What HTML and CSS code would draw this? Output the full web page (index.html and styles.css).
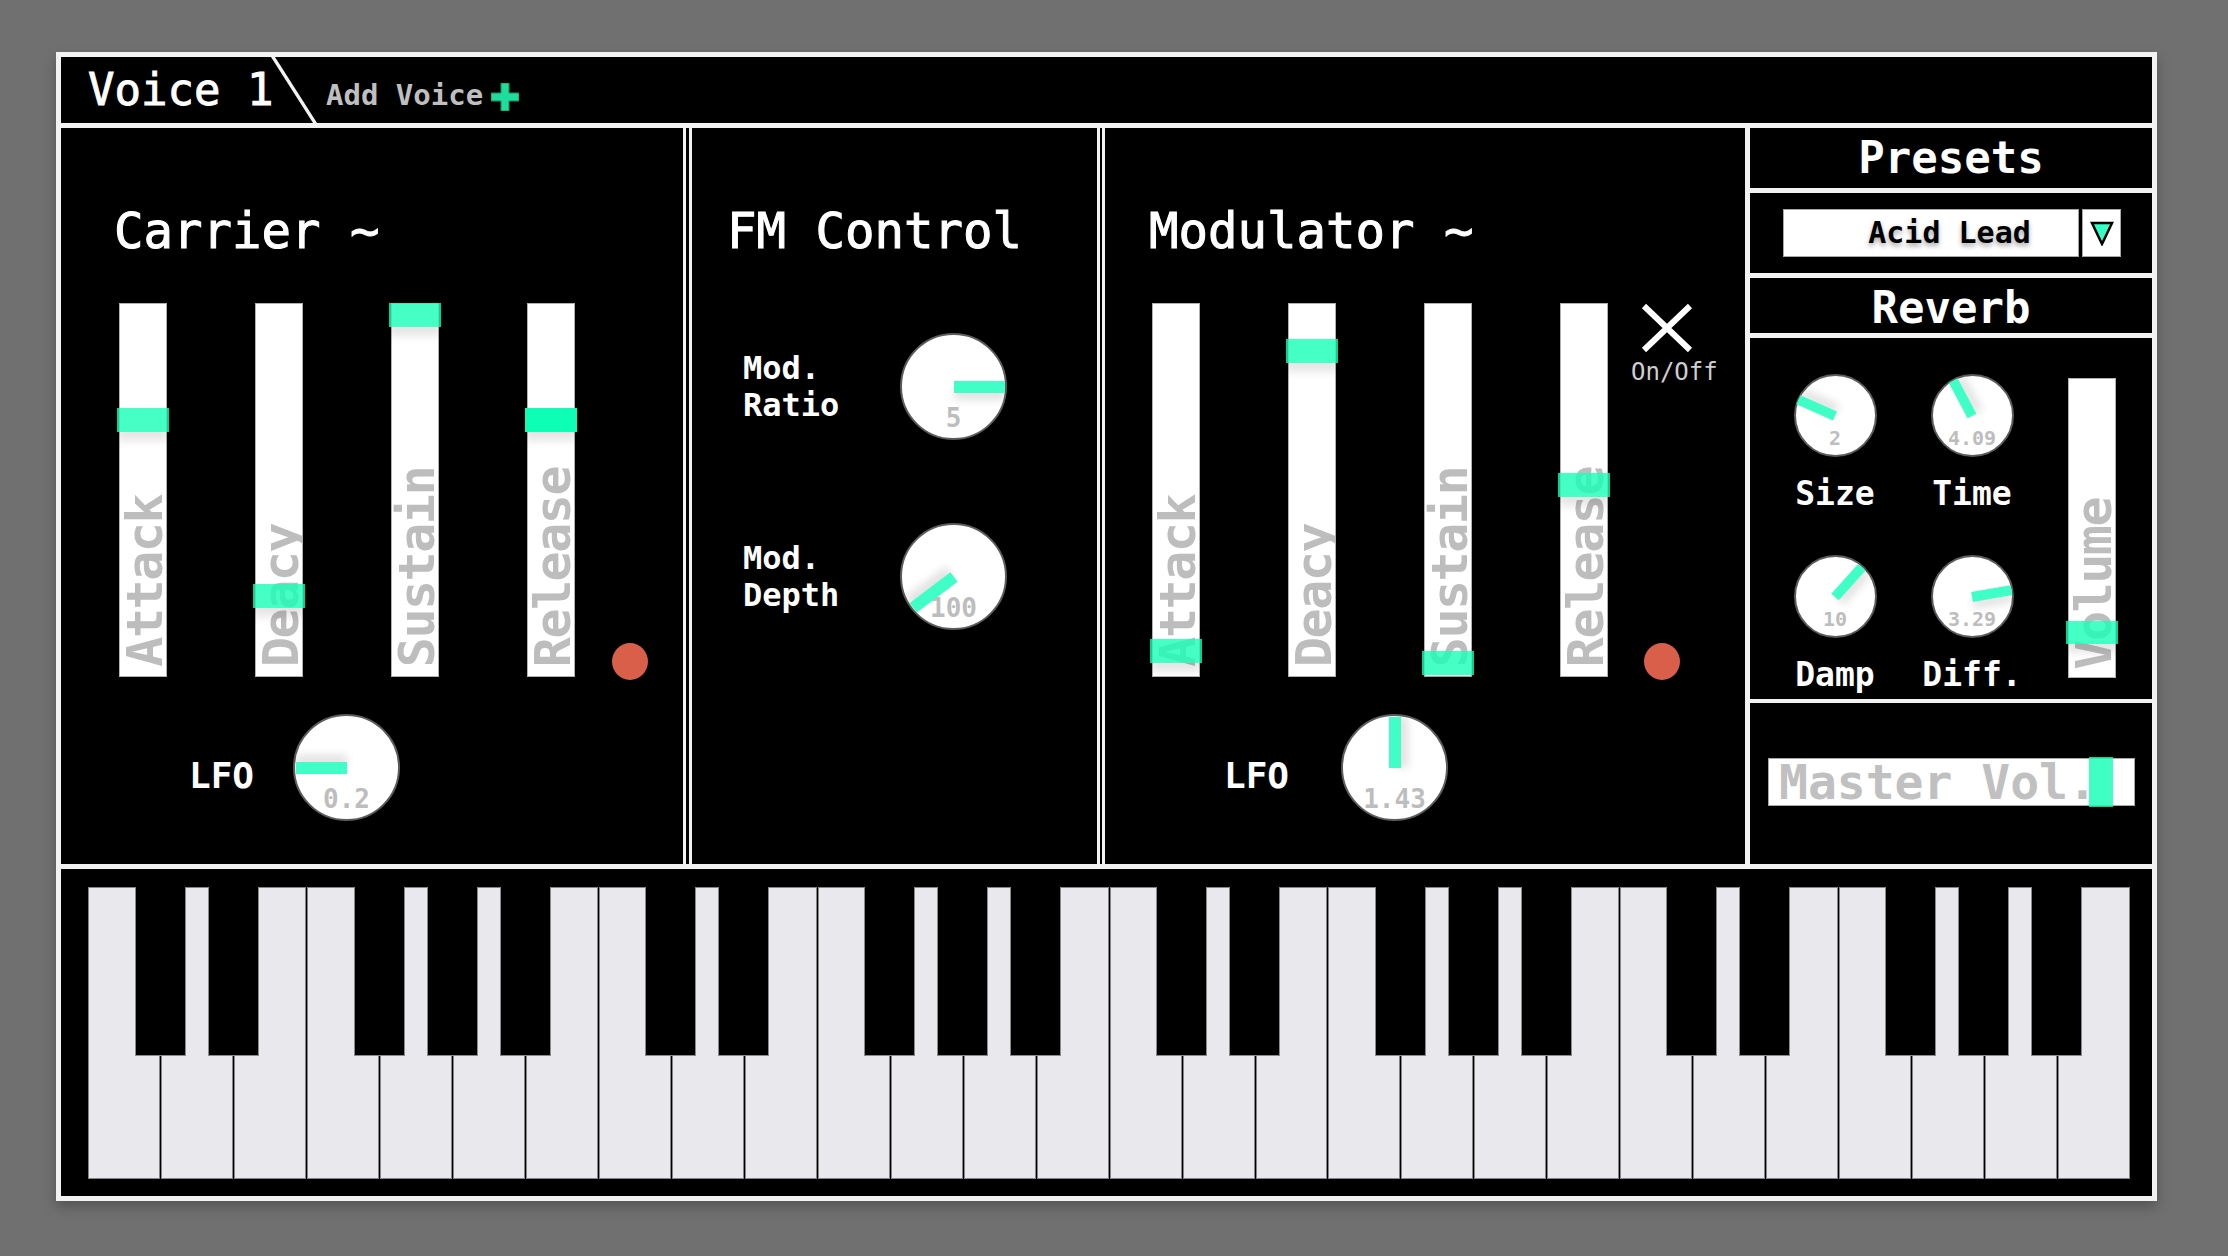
FILE: index.html
```html
<!DOCTYPE html>
<html lang="en">
<head>
<meta charset="utf-8">
<title>FM Synth</title>
<link rel="stylesheet" href="styles.css">
</head>
<body>
<div class="synth">
  <div class="tabs">
    <div class="tab-active">Voice 1</div>
    <div class="tab-add">Add Voice<svg class="plus" width="28" height="28" viewBox="0 0 28 28"><path d="M10 0h8v10h10v8H18v10h-8V18H0v-8h10z" fill="#1fdc9d" stroke="#0c8f63" stroke-width="1"/></svg></div>
  </div>

  <div class="panels">
    <section class="panel carrier">
      <h2 class="title">Carrier ~</h2>
      <div class="env">
        <div class="vslider"><div class="track"><span class="vlabel">Attack</span></div><div class="thumb" style="top:105px"></div></div>
        <div class="vslider"><div class="track"><span class="vlabel">Deacy</span></div><div class="thumb" style="top:281px"></div></div>
        <div class="vslider"><div class="track"><span class="vlabel">Sustain</span></div><div class="thumb" style="top:0px"></div></div>
        <div class="vslider"><div class="track"><span class="vlabel">Release</span></div><div class="thumb thumb-active" style="top:105px"></div></div>
        <div class="env-side"><span class="dot"></span></div>
      </div>
      <div class="lfo lfo-carrier">
        <span class="lfo-label">LFO</span>
        <div class="knob knob-lg"><span class="kval">0.2</span><span class="needle" style="transform:rotate(180deg)"></span></div>
      </div>
    </section>

    <section class="panel fm">
      <h2 class="title">FM Control</h2>
      <div class="fm-row fm-ratio">
        <span class="fm-label">Mod.<br>Ratio</span>
        <div class="knob knob-lg"><span class="kval">5</span><span class="needle" style="transform:rotate(0deg)"></span></div>
      </div>
      <div class="fm-row fm-depth">
        <span class="fm-label">Mod.<br>Depth</span>
        <div class="knob knob-lg"><span class="kval">100</span><span class="needle" style="transform:rotate(143deg)"></span></div>
      </div>
    </section>

    <section class="panel modulator">
      <h2 class="title">Modulator ~</h2>
      <div class="env">
        <div class="vslider"><div class="track"><span class="vlabel">Attack</span></div><div class="thumb" style="top:336px"></div></div>
        <div class="vslider"><div class="track"><span class="vlabel">Deacy</span></div><div class="thumb" style="top:36px"></div></div>
        <div class="vslider"><div class="track"><span class="vlabel">Sustain</span></div><div class="thumb" style="top:348px"></div></div>
        <div class="vslider"><div class="track"><span class="vlabel">Release</span></div><div class="thumb" style="top:170px"></div></div>
        <div class="env-side">
          <div class="toggle">
            <svg class="x-icon" width="54" height="50" viewBox="0 0 54 50"><path d="M4 3L50 47M50 3L4 47" stroke="#fff" stroke-width="6" fill="none"/></svg>
            <span class="toggle-label">On/Off</span>
          </div>
          <span class="dot"></span>
        </div>
      </div>
      <div class="lfo lfo-mod">
        <span class="lfo-label">LFO</span>
        <div class="knob knob-lg"><span class="kval">1.43</span><span class="needle" style="transform:rotate(-90deg)"></span></div>
      </div>
    </section>

    <section class="panel side">
      <div class="sec-head presets-head">Presets</div>
      <div class="sec-dd">
        <div class="dd">
          <div class="dd-box">Acid Lead</div>
          <div class="dd-arrow"><svg width="24" height="25" viewBox="0 0 24 25"><path d="M2 2H22L12 23Z" fill="#35ffc4" stroke="#000" stroke-width="2.5" stroke-linejoin="miter"/></svg></div>
        </div>
      </div>
      <div class="sec-head reverb-head">Reverb</div>
      <div class="reverb">
        <div class="rv-grid">
          <div class="rv-cell"><div class="knob knob-sm"><span class="kval">2</span><span class="needle" style="transform:rotate(-156deg)"></span></div><span class="rv-label">Size</span></div>
          <div class="rv-cell"><div class="knob knob-sm"><span class="kval">4.09</span><span class="needle" style="transform:rotate(-118deg)"></span></div><span class="rv-label">Time</span></div>
          <div class="rv-cell"><div class="knob knob-sm"><span class="kval">10</span><span class="needle" style="transform:rotate(-48deg)"></span></div><span class="rv-label">Damp</span></div>
          <div class="rv-cell"><div class="knob knob-sm"><span class="kval">3.29</span><span class="needle" style="transform:rotate(-10deg)"></span></div><span class="rv-label">Diff.</span></div>
        </div>
        <div class="vslider vol"><div class="track"><span class="vlabel">Volume</span></div><div class="thumb" style="top:243px"></div></div>
      </div>
      <div class="master">
        <div class="hslider"><span class="hlabel">Master Vol.</span><div class="hthumb" style="left:320px"></div></div>
      </div>
    </section>
  </div>

  <div class="keys-wrap">
    <div class="piano">
      <div class="wkey"></div><div class="wkey"></div><div class="wkey"></div><div class="wkey"></div><div class="wkey"></div><div class="wkey"></div><div class="wkey"></div>
      <div class="wkey"></div><div class="wkey"></div><div class="wkey"></div><div class="wkey"></div><div class="wkey"></div><div class="wkey"></div><div class="wkey"></div>
      <div class="wkey"></div><div class="wkey"></div><div class="wkey"></div><div class="wkey"></div><div class="wkey"></div><div class="wkey"></div><div class="wkey"></div>
      <div class="wkey"></div><div class="wkey"></div><div class="wkey"></div><div class="wkey"></div><div class="wkey"></div><div class="wkey"></div><div class="wkey"></div>

      <div class="bkey" style="left:calc(100% * 1 / 28 - 26px)"></div>
      <div class="bkey" style="left:calc(100% * 2 / 28 - 26px)"></div>
      <div class="bkey" style="left:calc(100% * 4 / 28 - 26px)"></div>
      <div class="bkey" style="left:calc(100% * 5 / 28 - 26px)"></div>
      <div class="bkey" style="left:calc(100% * 6 / 28 - 26px)"></div>
      <div class="bkey" style="left:calc(100% * 8 / 28 - 26px)"></div>
      <div class="bkey" style="left:calc(100% * 9 / 28 - 26px)"></div>
      <div class="bkey" style="left:calc(100% * 11 / 28 - 26px)"></div>
      <div class="bkey" style="left:calc(100% * 12 / 28 - 26px)"></div>
      <div class="bkey" style="left:calc(100% * 13 / 28 - 26px)"></div>
      <div class="bkey" style="left:calc(100% * 15 / 28 - 26px)"></div>
      <div class="bkey" style="left:calc(100% * 16 / 28 - 26px)"></div>
      <div class="bkey" style="left:calc(100% * 18 / 28 - 26px)"></div>
      <div class="bkey" style="left:calc(100% * 19 / 28 - 26px)"></div>
      <div class="bkey" style="left:calc(100% * 20 / 28 - 26px)"></div>
      <div class="bkey" style="left:calc(100% * 22 / 28 - 26px)"></div>
      <div class="bkey" style="left:calc(100% * 23 / 28 - 26px)"></div>
      <div class="bkey" style="left:calc(100% * 25 / 28 - 26px)"></div>
      <div class="bkey" style="left:calc(100% * 26 / 28 - 26px)"></div>
      <div class="bkey" style="left:calc(100% * 27 / 28 - 26px)"></div>
    </div>
  </div>
</div>
</body>
</html>
```

FILE: styles.css
```css
* {
  box-sizing: border-box;
  margin: 0;
  padding: 0;
}

html, body {
  width: 2228px;
  height: 1256px;
  overflow: hidden;
}

body {
  background: #707070;
  font-family: "DejaVu Sans Mono", "Liberation Mono", monospace;
  color: #fff;
}

.synth {
  margin: 52px 0 0 56px;
  width: 2101px;
  height: 1149px;
  border: 5px solid #f2f2f2;
  background: #000;
  box-shadow: 0 6px 12px rgba(0, 0, 0, 0.25);
  display: flex;
  flex-direction: column;
}

/* ---------- tabs ---------- */
.tabs {
  height: 71px;
  flex: none;
  border-bottom: 5px solid #f2f2f2;
  display: flex;
  align-items: baseline;
}

.tab-active {
  position: relative;
  width: 211px;
  padding-left: 27px;
  font-size: 44px;
  line-height: 66px;
  white-space: nowrap;
  -webkit-text-stroke: 0.9px #fff;
}

.tab-active::after {
  content: "";
  position: absolute;
  left: 210px;
  top: 0;
  width: 4px;
  height: 66px;
  background: #f2f2f2;
  transform-origin: top left;
  transform: skewX(32.5deg);
}

.tab-add {
  margin-left: 54px;
  font-size: 29px;
  font-weight: bold;
  color: #bfbfbf;
  white-space: nowrap;
}

.plus {
  margin-left: 8px;
  vertical-align: -6px;
}

/* ---------- panels ---------- */
.panels {
  height: 741px;
  flex: none;
  border-bottom: 5px solid #f2f2f2;
  display: flex;
}

.panel {
  display: flex;
  flex-direction: column;
  height: 736px;
  flex: none;
}

.carrier {
  width: 625px;
  border-right: 3px solid #f2f2f2;
  padding: 79px 0 0 53px;
}

.fm {
  width: 411px;
  margin-left: 3px;
  border-left: 3px solid #f2f2f2;
  border-right: 3px solid #f2f2f2;
  padding: 79px 0 0 35px;
}

.modulator {
  width: 643px;
  margin-left: 2px;
  border-left: 3px solid #f2f2f2;
  padding: 79px 0 0 44px;
}

.side {
  width: 407px;
  border-left: 5px solid #f2f2f2;
}

.title {
  font-size: 49px;
  line-height: 49px;
  font-weight: normal;
  white-space: nowrap;
  color: #fff;
  -webkit-text-stroke: 1px #fff;
}

/* ---------- envelope sliders ---------- */
.env {
  display: flex;
  margin-top: 47px;
  height: 374px;
}

.carrier .env {
  margin-left: 5px;
}

.modulator .env {
  margin-left: 3px;
}

.vslider {
  position: relative;
  width: 48px;
  height: 374px;
  flex: none;
}

.vslider + .vslider {
  margin-left: 88px;
}

.track {
  width: 100%;
  height: 100%;
  background: #fff;
  border: 1px solid #b0b0b0;
  overflow: hidden;
  display: flex;
  flex-direction: column;
  justify-content: flex-end;
  align-items: flex-start;
}

.vlabel {
  writing-mode: vertical-rl;
  transform: rotate(180deg);
  width: 52px;
  font-size: 50px;
  line-height: 51px;
  letter-spacing: -1.5px;
  font-weight: bold;
  color: #bdbdbd;
  white-space: nowrap;
  margin-bottom: 9px;
}

.thumb {
  position: absolute;
  left: -2px;
  right: -2px;
  height: 24px;
  background: rgba(22, 255, 182, 0.8);
  box-shadow: 0 9px 9px rgba(0, 0, 0, 0.1);
}

.thumb-active {
  background: #0cffb4;
}

.env-side {
  width: 36px;
  margin-left: 37px;
  display: flex;
  flex-direction: column;
  justify-content: flex-end;
  align-items: flex-start;
}

.modulator .env-side {
  margin-left: 36px;
  justify-content: space-between;
}

.dot {
  display: block;
  width: 36px;
  height: 37px;
  border-radius: 50%;
  background: #d95f4b;
  margin-bottom: -3px;
}

.toggle {
  width: 84px;
  margin-left: -13px;
  display: flex;
  flex-direction: column;
  align-items: flex-start;
}

.x-icon {
  display: block;
  margin-left: 9px;
}

.toggle-label {
  margin-top: 7px;
  font-size: 24px;
  line-height: 24px;
  color: #cfcfcf;
  white-space: nowrap;
}

/* ---------- knobs ---------- */
.knob {
  position: relative;
  flex: none;
  border-radius: 50%;
  background: #fff;
  border: 2px solid #5c5c5c;
}

.knob-lg {
  width: 107px;
  height: 107px;
}

.knob-sm {
  width: 83px;
  height: 83px;
}

.kval {
  position: absolute;
  left: 0;
  right: 0;
  text-align: center;
  font-weight: bold;
  color: #bdbdbd;
  white-space: nowrap;
}

.knob-lg .kval {
  top: calc(50% + 18px);
  font-size: 26px;
  line-height: 26px;
}

.knob-sm .kval {
  top: calc(50% + 12px);
  font-size: 20px;
  line-height: 20px;
}

.needle {
  position: absolute;
  left: 50%;
  top: 50%;
  transform-origin: 0 50%;
  background: #3fffc6;
  box-shadow: 0 7px 8px rgba(0, 0, 0, 0.12);
}

.knob-lg .needle {
  width: 51px;
  height: 12px;
  margin-top: -6px;
}

.knob-sm .needle {
  width: 40px;
  height: 10px;
  margin-top: -5px;
}

/* ---------- LFO rows ---------- */
.lfo {
  display: flex;
  align-items: center;
  margin-top: 37px;
}

.lfo-label {
  font-size: 36px;
  line-height: 36px;
  font-weight: bold;
  margin-top: 17px;
  white-space: nowrap;
}

.lfo-carrier {
  margin-left: 75px;
}

.lfo-carrier .knob {
  margin-left: 39px;
}

.lfo-mod {
  margin-left: 75px;
}

.lfo-mod .knob {
  margin-left: 52px;
}

/* ---------- FM control ---------- */
.fm-row {
  display: flex;
  align-items: center;
  margin-left: 16px;
}

.fm-ratio {
  margin-top: 77px;
}

.fm-depth {
  margin-top: 83px;
}

.fm-label {
  width: 157px;
  font-size: 32px;
  line-height: 37px;
  font-weight: bold;
}

/* ---------- right column ---------- */
.sec-head {
  flex: none;
  text-align: center;
  font-size: 44px;
  font-weight: bold;
  border-bottom: 5px solid #f2f2f2;
}

.presets-head {
  height: 65px;
  line-height: 60px;
}

.reverb-head {
  height: 60px;
  padding-top: 4px;
  line-height: 51px;
}

.sec-dd {
  flex: none;
  height: 85px;
  border-bottom: 5px solid #f2f2f2;
  display: flex;
  align-items: center;
  padding-left: 33px;
}

.dd {
  display: flex;
  height: 48px;
}

.dd-box {
  width: 296px;
  height: 48px;
  background: #fff;
  border: 1px solid #a8a8a8;
  padding-left: 37px;
  text-align: center;
  font-size: 30px;
  line-height: 46px;
  font-weight: bold;
  color: #000;
  text-shadow: 0 3px 5px rgba(0, 0, 0, 0.35);
  white-space: nowrap;
}

.dd-arrow {
  width: 39px;
  height: 48px;
  margin-left: 3px;
  background: #fff;
  border: 1px solid #a8a8a8;
  display: flex;
  align-items: center;
  justify-content: center;
  box-shadow: 0 3px 6px rgba(0, 0, 0, 0.2);
}

.reverb {
  flex: none;
  height: 365px;
  border-bottom: 4px solid #f2f2f2;
  display: flex;
  align-items: flex-start;
  padding: 36px 0 0 28px;
}

.rv-grid {
  display: grid;
  grid-template-columns: 114px 114px;
  column-gap: 23px;
  row-gap: 44px;
}

.rv-cell {
  display: flex;
  flex-direction: column;
  align-items: center;
}

.rv-label {
  margin-top: 20px;
  font-size: 33px;
  line-height: 34px;
  font-weight: bold;
  white-space: nowrap;
}

.vol {
  height: 300px;
  margin-left: 39px;
  margin-top: 4px;
}

.vol .thumb {
  height: 23px;
}

.vol .vlabel {
  margin-bottom: 7px;
}

.master {
  flex: 1;
  display: flex;
  align-items: center;
  padding: 0 0 4px 18px;
}

.hslider {
  position: relative;
  width: 367px;
  height: 48px;
  background: #fff;
  border: 1px solid #a8a8a8;
}

.hlabel {
  display: block;
  padding-left: 10px;
  font-size: 48px;
  line-height: 46px;
  font-weight: bold;
  color: #c0c0c0;
  white-space: nowrap;
}

.hthumb {
  position: absolute;
  top: -2px;
  width: 24px;
  height: 50px;
  background: rgba(22, 255, 182, 0.82);
}

/* ---------- keyboard ---------- */
.keys-wrap {
  flex: 1;
  padding: 18px 0 0 27px;
}

.piano {
  position: relative;
  width: 2042px;
  height: 292px;
  display: flex;
  gap: 1px;
}

.wkey {
  flex: 1;
  background: #e9e8ed;
  border: 1px solid #858585;
}

.bkey {
  position: absolute;
  top: 0;
  width: 51px;
  height: 169px;
  background: #000;
  border: 1px solid #8a8a8a;
  border-top: none;
}
```
